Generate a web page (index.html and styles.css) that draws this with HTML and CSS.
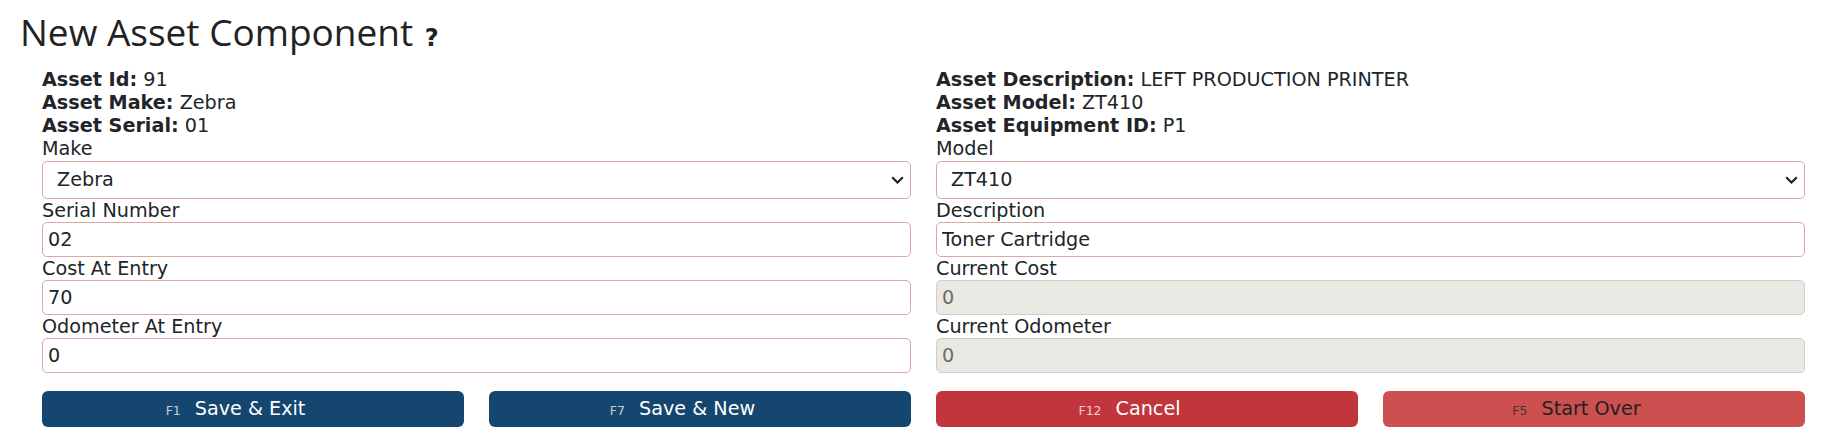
FILE: index.html
```html
<!doctype html>
<html lang="en">
<head>
  <meta charset="UTF-8"/>
  <meta name="viewport" content="width=device-width, initial-scale=1.0"/>
  <title>New Asset Component</title>
  <link rel="stylesheet" href="styles.css">
</head>
<body>
  <h1 class="page-title">New Asset Component <span class="help">?</span></h1>

  <div class="content">
    <div class="form-grid">
      <div class="col">
        <div class="info"><b>Asset Id:</b> 91</div>
        <div class="info"><b>Asset Make:</b> Zebra</div>
        <div class="info"><b>Asset Serial:</b> 01</div>

        <label for="make">Make</label>
        <div class="select-wrap">
          <select id="make">
            <option>Zebra</option>
          </select>
          <svg class="chevron" width="13" height="8" viewBox="0 0 13 8"><path d="M1.2 1.2 L6.5 6.5 L11.8 1.2" fill="none" stroke="#222" stroke-width="2.2"/></svg>
        </div>

        <label for="serial">Serial Number</label>
        <input type="text" id="serial" value="02"/>

        <label for="cost">Cost At Entry</label>
        <input type="text" id="cost" value="70"/>

        <label for="odometer">Odometer At Entry</label>
        <input type="text" id="odometer" value="0"/>
      </div>

      <div class="col">
        <div class="info"><b>Asset Description:</b> LEFT PRODUCTION PRINTER</div>
        <div class="info"><b>Asset Model:</b> ZT410</div>
        <div class="info"><b>Asset Equipment ID:</b> P1</div>

        <label for="model">Model</label>
        <div class="select-wrap">
          <select id="model">
            <option>ZT410</option>
          </select>
          <svg class="chevron" width="13" height="8" viewBox="0 0 13 8"><path d="M1.2 1.2 L6.5 6.5 L11.8 1.2" fill="none" stroke="#222" stroke-width="2.2"/></svg>
        </div>

        <label for="description">Description</label>
        <input type="text" id="description" value="Toner Cartridge"/>

        <label for="currentCost">Current Cost</label>
        <input type="text" id="currentCost" value="0" disabled/>

        <label for="currentOdometer">Current Odometer</label>
        <input type="text" id="currentOdometer" value="0" disabled/>
      </div>
    </div>

    <div class="actions">
      <button class="btn btn-primary"><span class="key">F1</span>Save &amp; Exit</button>
      <button class="btn btn-primary"><span class="key">F7</span>Save &amp; New</button>
      <button class="btn btn-danger"><span class="key">F12</span>Cancel</button>
      <button class="btn btn-reset"><span class="key">F5</span>Start Over</button>
    </div>
  </div>
</body>
</html>
```

FILE: styles.css
```css
body {
  margin: 0;
  padding: 0;
  background: #fff;
  font-family: 'DejaVu Sans', Verdana, sans-serif;
  font-size: 19.2px;
  line-height: 1.2;
  color: #212529;
}

.page-title {
  margin: 10px 0 14px 20px;
  font-family: 'Open Sans', 'Noto Sans', sans-serif;
  font-size: 37px;
  font-weight: normal;
  line-height: 1.2;
  color: #222;
}

.page-title .help {
  font-family: 'DejaVu Sans', sans-serif;
  font-size: 24px;
  font-weight: bold;
  margin-left: 2px;
}

.content {
  width: 1763px;
  padding-left: 42px;
}

.form-grid {
  display: grid;
  grid-template-columns: 1fr 1fr;
  column-gap: 25px;
}

.col {
  display: flex;
  flex-direction: column;
}

.info b {
  font-weight: bold;
}

.col label {
  display: block;
}

.select-wrap {
  position: relative;
}

.select-wrap select {
  -webkit-appearance: none;
  appearance: none;
  display: block;
  width: 100%;
  height: 38px;
  padding: 0 14px;
  border: 1px solid #d8a9a1;
  border-radius: 5px;
  background: #fff;
  font: inherit;
  color: #212529;
  box-sizing: border-box;
}

.select-wrap .chevron {
  position: absolute;
  right: 7px;
  top: 15px;
}

.col input {
  display: block;
  width: 100%;
  height: 35px;
  padding: 0 5px;
  border: 1px solid #d8a9a1;
  border-radius: 5px;
  background: #fff;
  font: inherit;
  color: #212529;
  box-sizing: border-box;
}

.col input:disabled {
  background: #e9e8e3;
  border-color: #cfcecb;
  color: #6c6c6c;
}

.actions {
  display: grid;
  grid-template-columns: repeat(4, 1fr);
  column-gap: 25px;
  margin-top: 18px;
}

.btn {
  height: 36px;
  padding: 0 35px 0 0;
  border: none;
  border-radius: 6px;
  font: inherit;
  color: #fff;
  text-align: center;
  cursor: pointer;
}

.btn .key {
  font-size: 12.5px;
  margin-right: 14px;
  color: #c9ced6;
}

.btn-primary {
  background: #14466f;
}

.btn-danger {
  background: #c1363d;
}

.btn-danger .key {
  color: #f1c9cb;
}

.btn-reset {
  background: #cd4f4f;
  color: #222;
}

.btn-reset .key {
  color: #4a3030;
}
```
